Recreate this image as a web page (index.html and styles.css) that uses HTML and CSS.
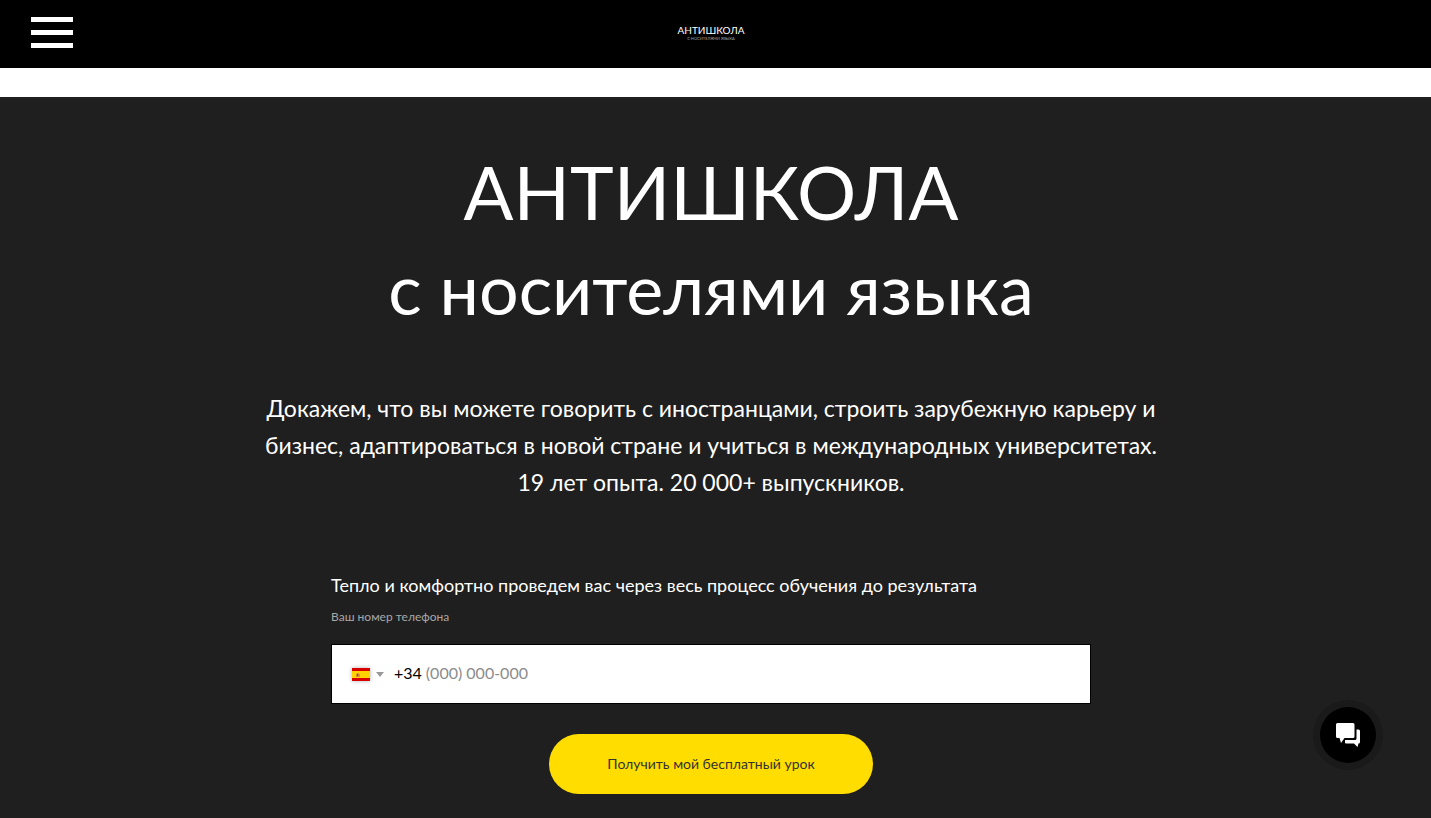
FILE: index.html
```
<!DOCTYPE html>
<html lang="ru">
<head>
	<meta charset="utf-8">
	<meta name="viewport" content="width=device-width, initial-scale=1">
	<title>Антишкола с носителями языка</title>
	<link rel="stylesheet" href="styles.css">
</head>
<body>
<header class="head">
	<button type="button" class="burger" aria-label="Меню">
		<span></span>
		<span></span>
		<span></span>
	</button>
	<a href="#" class="logo">
		<span class="logo-name">АНТИШКОЛА</span>
		<span class="logo-sub">С НОСИТЕЛЯМИ ЯЗЫКА</span>
	</a>
</header>
<main class="main">
	<h1 class="title">
		<span class="title-top">АНТИШКОЛА</span>
		<span class="title-sub">с носителями языка</span>
	</h1>
	<p class="descr">Докажем, что вы можете говорить с иностранцами, строить зарубежную карьеру и<br>бизнес, адаптироваться в новой стране и учиться в международных университетах.<br>19 лет опыта. 20 000+ выпускников.</p>
	<form class="form" action="#">
		<label class="form-title" for="phone">Тепло и комфортно проведем вас через весь процесс обучения до результата</label>
		<label class="form-label" for="phone">Ваш номер телефона</label>
		<div class="phone">
			<button type="button" class="country" aria-label="Испания">
				<svg class="flag" width="18" height="13" viewBox="0 0 18 13">
					<rect width="18" height="13" fill="#d90000"/>
					<rect y="3" width="18" height="7" fill="#ffd200"/>
					<path d="M4 6h1v-1h2v1h1v3H4z" fill="#d98a3a"/>
					<path d="M5 6h1v2H5z" fill="#b5313a"/>
				</svg>
				<span class="arrow"></span>
			</button>
			<span class="code">+34</span>
			<input type="tel" id="phone" class="phone-input" placeholder="(000) 000-000">
		</div>
		<button type="submit" class="submit">Получить мой бесплатный урок</button>
	</form>
</main>
<button type="button" class="chat" aria-label="Чат">
	<svg width="24" height="24" viewBox="0 0 24 24" fill="#fff">
		<path d="M1.500 0h15.500a1.500 1.500 0 0 1 1.500 1.500v12a1.500 1.500 0 0 1-1.500 1.500H8.500l-3.500 5-1.500-5H1.500a1.500 1.500 0 0 1-1.500-1.500V1.500A1.500 1.500 0 0 1 1.500 0z"/>
		<path d="M20.500 6.500h2a1.500 1.500 0 0 1 1.500 1.500v11a1.500 1.500 0 0 1-1.500 1.500H22.500l-1 3.500-3.500-3.500h-8a1 1 0 0 1-1-1v-2.500h10a1.500 1.500 0 0 0 1.500-1.500z"/>
	</svg>
</button>
</body>
</html>
```
FILE: styles.css
```
* {
	box-sizing: border-box;
	padding: 0;
	margin: 0;
}

body {
	min-height: 100vh;
	display: flex;
	flex-direction: column;
	background: #fff;
	color: #fff;
	font-family: Lato, "Open Sans", sans-serif;
}

button, input {
	border: 0;
	background: none;
	font-family: inherit;
}

button {
	cursor: pointer;
}

/* header */
.head {
	display: grid;
	grid-template-columns: 1fr auto 1fr;
	align-items: center;
	height: 68px;
	padding: 0 40px 4px 31px;
	margin-bottom: 29px;
	background: #000;
}

.burger {
	display: flex;
	flex-direction: column;
	gap: 8px;
	width: 42px;
}

.burger span {
	height: 5px;
	background: #fff;
}

.logo {
	color: #fff;
	text-align: center;
	text-decoration: none;
}

.logo span {
	display: block;
}

.logo-name {
	font-size: 10px;
	line-height: 12px;
}

.logo-sub {
	color: #aaa;
	font-size: 4px;
	line-height: 5px;
}

/* first screen */
.main {
	flex: 1;
	display: flex;
	flex-direction: column;
	align-items: center;
	padding: 47px 29px 24px 20px;
	background: #1f1f1f;
}

.title {
	font-weight: 400;
	text-align: center;
	margin-bottom: 54px;
}

.title span {
	display: block;
	line-height: 96px;
}

.title-top {
	font-size: 74px;
}

.title-sub {
	font-size: 70px;
}

.descr {
	font-size: 23px;
	line-height: 37px;
	text-align: center;
	margin-bottom: 72px;
}

.form {
	display: flex;
	flex-direction: column;
	width: 100%;
	max-width: 760px;
}

.form-title {
	font-size: 18px;
	line-height: 24px;
	margin-bottom: 10px;
}

.form-label {
	color: #a8a8a8;
	font-size: 12px;
	line-height: 20px;
	margin-bottom: 17px;
}

.phone {
	display: flex;
	align-items: center;
	height: 60px;
	padding: 0 20px;
	border: 1px solid #000;
	background: #fff;
}

.country {
	display: flex;
	align-items: center;
	gap: 6px;
	margin-right: 10px;
}

.flag {
	box-shadow: 0 0 4px rgba(0, 0, 0, .3);
}

.arrow {
	border: 4px solid transparent;
	border-top: 5px solid #999;
	border-bottom: 0;
}

.code, .phone-input {
	padding-bottom: 3px;
	color: #000;
	font-size: 16px;
}

.code {
	margin-right: 4px;
}

.phone-input {
	flex: 1;
	min-width: 0;
	outline: none;
}

.phone-input::placeholder {
	color: #8c8c8c;
	opacity: 1;
}

.submit {
	align-self: center;
	height: 60px;
	padding: 0 58px 2px;
	margin-top: 30px;
	border-radius: 30px;
	background: #ffdd00;
	color: #333;
	font-size: 14px;
}

/* chat widget */
.chat {
	position: fixed;
	right: 55px;
	bottom: 55px;
	display: flex;
	align-items: center;
	justify-content: center;
	width: 56px;
	height: 56px;
	border-radius: 50%;
	background: #000;
	box-shadow: 0 0 0 7px #1a1a1a;
}
```
